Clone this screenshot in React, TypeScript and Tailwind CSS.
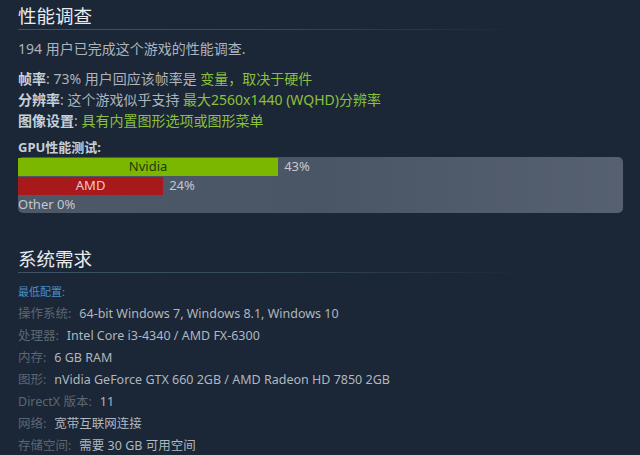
const sans = "font-['Noto_Sans','Noto_Sans_CJK_SC',sans-serif]"

const gpu = [
  { name: 'Nvidia', pct: 43, bar: 'bg-[#7cb700]', text: 'text-[#1f3a0a]' },
  { name: 'AMD', pct: 24, bar: 'bg-[#a7191b]', text: 'text-[#f0c8c8]' },
]

const reqs: [string, string][] = [
  ['操作系统:', '64-bit Windows 7, Windows 8.1, Windows 10'],
  ['处理器:', 'Intel Core i3-4340 / AMD FX-6300'],
  ['内存:', '6 GB RAM'],
  ['图形:', 'nVidia GeForce GTX 660 2GB / AMD Radeon HD 7850 2GB'],
  ['DirectX 版本:', '11'],
  ['网络:', '宽带互联网连接'],
  ['存储空间:', '需要 30 GB 可用空间'],
]

function Heading({ children }: { children: string }) {
  return (
    <div>
      <h2 className="text-[18.5px] leading-[26px] text-[#e8ecef]">{children}</h2>
      <div className="h-px w-[512px] bg-gradient-to-r from-[#3e5366] via-[#34495c] to-transparent" />
    </div>
  )
}

export default function App() {
  return (
    <div className={`w-[640px] h-[455px] overflow-hidden bg-[#1b2637] px-[18px] pt-[3px] ${sans}`}>
      <Heading>性能调查</Heading>

      <p className="mt-[10px] text-[14px] leading-[18px] text-[#acb4bc]">194 用户已完成这个游戏的性能调查.</p>

      <div className="mt-[10px] text-[14px] leading-[21px] text-[#acb4bc]">
        <div>
          <b className="text-[#c6d0d8]">帧率</b>: 73% 用户回应该帧率是 <span className="text-[#8cc03c]">变量，取决于硬件</span>
        </div>
        <div>
          <b className="text-[#c6d0d8]">分辨率</b>: 这个游戏似乎支持 <span className="text-[#8cc03c]">最大2560x1440 (WQHD)分辨率</span>
        </div>
        <div>
          <b className="text-[#c6d0d8]">图像设置</b>: <span className="text-[#8cc03c]">具有内置图形选项或图形菜单</span>
        </div>
      </div>

      <div className="mt-[9px] text-[13px] leading-[15px] font-bold text-[#c6d0d8]">GPU性能测试:</div>
      <div className="mt-[2px] w-[605px] h-[56px] rounded-[5px] bg-gradient-to-r from-[#4d5869] via-[#4a5565] to-[#566070] py-px text-[13px] text-[#c2c8ce]">
        {gpu.map((g) => (
          <div key={g.name} className="flex items-center h-[18px] mb-px">
            <div className={`h-full flex items-center justify-center ${g.bar} ${g.text}`} style={{ width: `${g.pct}%` }}>
              {g.name}
            </div>
            <span className="ml-[6px]">{g.pct}%</span>
          </div>
        ))}
        <div className="h-[18px] flex items-center">Other 0%</div>
      </div>

      <div className="mt-[33px]">
        <Heading>系统需求</Heading>
      </div>

      <div className="mt-[12px] text-[11px] leading-[14px] text-[#4a8fc4]">最低配置:</div>
      <div className="mt-[4px] leading-[22px]">
        {reqs.map(([k, v]) => (
          <div key={k} className="flex items-baseline gap-[8px]">
            <span className="text-[12.5px] text-[#5d6773]">{k}</span>
            <span className="text-[12.5px] text-[#b0b7be]">{v}</span>
          </div>
        ))}
      </div>
    </div>
  )
}
